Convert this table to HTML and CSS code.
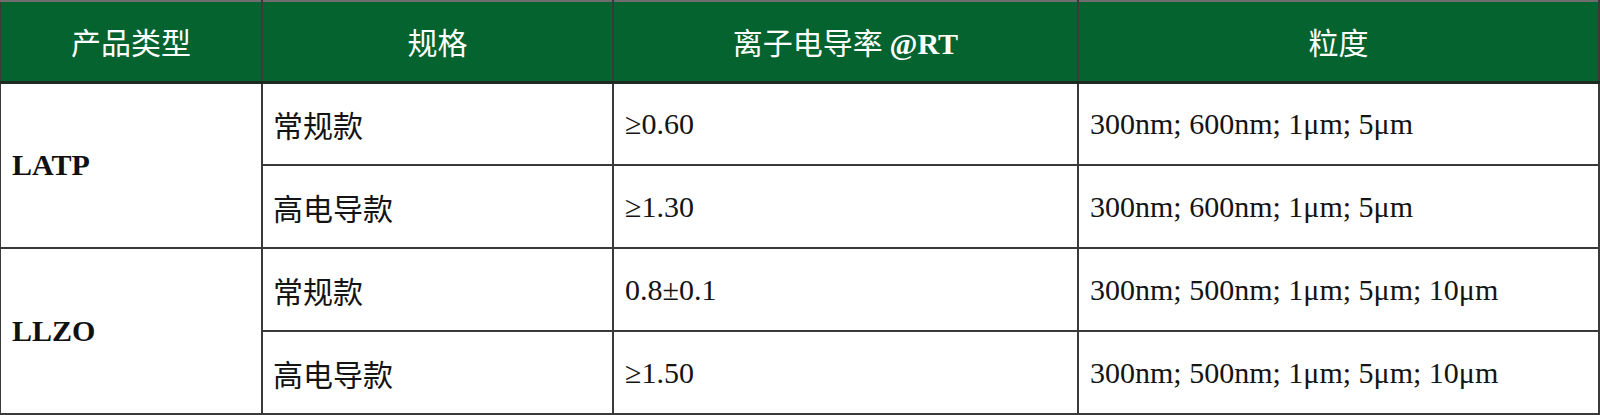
FILE: index.html
```html
<!DOCTYPE html>
<html lang="zh">
<head>
<meta charset="utf-8">
<link rel="stylesheet" href="styles.css">
</head>
<body>
<table class="spec">
  <colgroup>
    <col class="c1"><col class="c2"><col class="c3"><col class="c4">
  </colgroup>
  <thead>
    <tr>
      <th class="cjk">产品类型</th>
      <th class="cjk">规格</th>
      <th class="cjk">离子电导率 <span class="lat">@RT</span></th>
      <th class="cjk">粒度</th>
    </tr>
  </thead>
  <tbody>
    <tr>
      <td class="type" rowspan="2">LATP</td>
      <td class="cjk">常规款</td>
      <td class="num">≥0.60</td>
      <td class="num">300nm; 600nm; 1μm; 5μm</td>
    </tr>
    <tr>
      <td class="cjk">高电导款</td>
      <td class="num">≥1.30</td>
      <td class="num">300nm; 600nm; 1μm; 5μm</td>
    </tr>
    <tr>
      <td class="type" rowspan="2">LLZO</td>
      <td class="cjk">常规款</td>
      <td class="num">0.8±0.1</td>
      <td class="num">300nm; 500nm; 1μm; 5μm; 10μm</td>
    </tr>
    <tr>
      <td class="cjk">高电导款</td>
      <td class="num">≥1.50</td>
      <td class="num">300nm; 500nm; 1μm; 5μm; 10μm</td>
    </tr>
  </tbody>
</table>
</body>
</html>
```

FILE: styles.css
```css
html, body {
  margin: 0;
  padding: 0;
  background: #ffffff;
}

.spec {
  border-collapse: collapse;
  table-layout: fixed;
  width: 1599px;
  margin-left: -1px;
  margin-top: 0;
}

.c1 { width: 262px; }
.c2 { width: 351px; }
.c3 { width: 465px; }
.c4 { width: 521px; }

.spec th,
.spec td {
  border: 2px solid #3a3a3a;
  padding: 0 0 0 11px;
  height: 83px;
  box-sizing: border-box;
  vertical-align: middle;
  color: #141414;
  font-size: 30px;
  font-weight: normal;
  text-align: left;
  white-space: nowrap;
}

.spec td.cjk {
  padding-left: 10px;
}

.spec thead th {
  background: #04632f;
  color: #ffffff;
  text-align: center;
  padding: 0;
  height: 81px;
  border-top: 2px solid #6e6e6e;
  border-bottom: 3px solid #1e2a22;
}

.cjk {
  font-family: "Noto Sans CJK SC", "Noto Sans", sans-serif;
}

.lat {
  font-family: "Liberation Serif", serif;
  font-weight: bold;
}

.num {
  font-family: "Liberation Serif", "Noto Sans CJK SC", serif;
}

.spec td.type {
  font-family: "Liberation Serif", serif;
  font-weight: bold;
  color: #111111;
  padding-left: 11px;
}
```
